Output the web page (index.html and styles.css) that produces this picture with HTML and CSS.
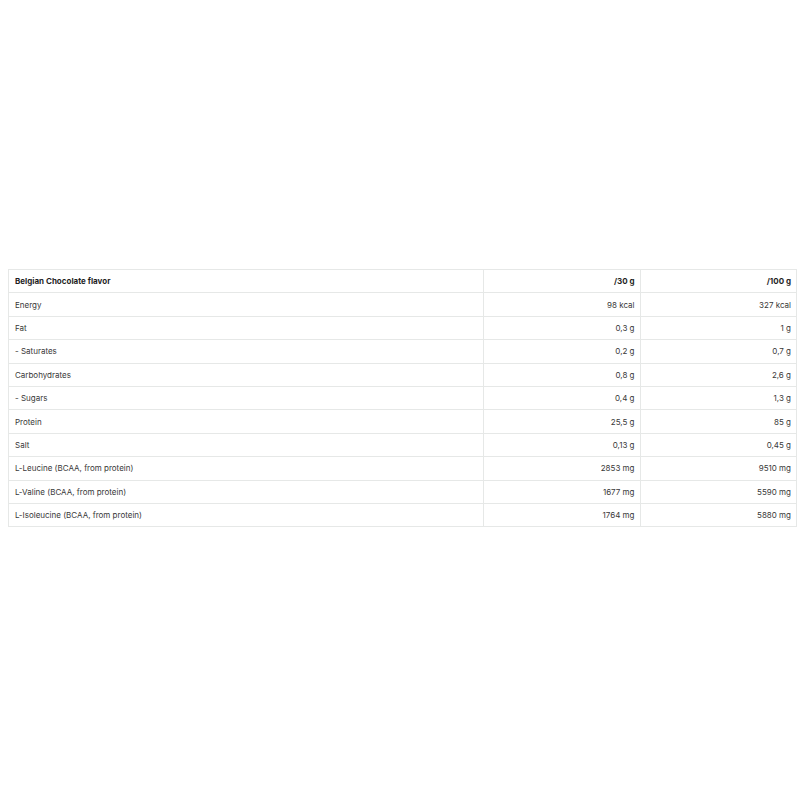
FILE: index.html
```html
<!DOCTYPE html>
<html>
<head>
<meta charset="utf-8">
<link rel="stylesheet" href="styles.css">
</head>
<body>
<div class="page">
<table class="nutrition">
  <colgroup>
    <col class="c-name">
    <col class="c-val">
    <col class="c-val">
  </colgroup>
  <thead>
    <tr><th class="name">Belgian Chocolate flavor</th><th>/30 g</th><th>/100 g</th></tr>
  </thead>
  <tbody>
    <tr><td class="name">Energy</td><td>98 kcal</td><td>327 kcal</td></tr>
    <tr><td class="name">Fat</td><td>0,3 g</td><td>1 g</td></tr>
    <tr><td class="name">- Saturates</td><td>0,2 g</td><td>0,7 g</td></tr>
    <tr><td class="name">Carbohydrates</td><td>0,8 g</td><td>2,6 g</td></tr>
    <tr><td class="name">- Sugars</td><td>0,4 g</td><td>1,3 g</td></tr>
    <tr><td class="name">Protein</td><td>25,5 g</td><td>85 g</td></tr>
    <tr><td class="name">Salt</td><td>0,13 g</td><td>0,45 g</td></tr>
    <tr><td class="name">L-Leucine (BCAA, from protein)</td><td>2853 mg</td><td>9510 mg</td></tr>
    <tr><td class="name">L-Valine (BCAA, from protein)</td><td>1677 mg</td><td>5590 mg</td></tr>
    <tr><td class="name">L-Isoleucine (BCAA, from protein)</td><td>1764 mg</td><td>5880 mg</td></tr>
  </tbody>
</table>
</div>
</body>
</html>
```
FILE: styles.css
```css
html, body {
  margin: 0;
  padding: 0;
  background: #ffffff;
}
.page {
  padding: 269px 4px 0 8px;
}
.nutrition {
  width: 788px;
  border-collapse: collapse;
  table-layout: fixed;
  font-family: Inter, "Noto Sans", sans-serif;
  font-size: 8px;
  color: #383838;
}
.c-name { width: 475px; }
.c-val { width: 156.5px; }
.nutrition th,
.nutrition td {
  border: 1px solid #e6e8e7;
  height: 22.4px;
  padding: 0 5px 0 6px;
  text-align: right;
  vertical-align: middle;
  white-space: nowrap;
}
.nutrition th {
  font-weight: 700;
  color: #1f1f1f;
}
.nutrition .name {
  text-align: left;
}
```
